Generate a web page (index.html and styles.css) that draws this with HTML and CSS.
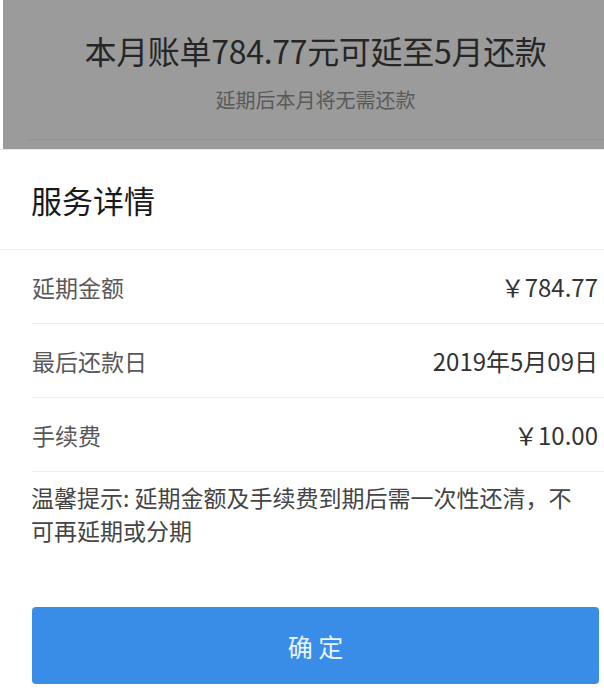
FILE: index.html
```html
<!DOCTYPE html>
<html lang="zh-CN">
<head>
    <meta charset="UTF-8">
    <meta name="viewport" content="width=device-width, initial-scale=1.0">
    <title>服务详情</title>
    <link rel="stylesheet" href="styles.css">
</head>
<body>
    <div class="mask">
        <h1 class="mask-title">本月账单784.77元可延至5月还款</h1>
        <p class="mask-sub">延期后本月将无需还款</p>
        <div class="mask-line"></div>
    </div>

    <div class="sheet">
        <h2 class="sheet-title">服务详情</h2>
        <ul class="details">
            <li class="row">
                <span class="label">延期金额</span>
                <span class="value">￥784.77</span>
            </li>
            <li class="row">
                <span class="label">最后还款日</span>
                <span class="value">2019年5月09日</span>
            </li>
            <li class="row">
                <span class="label">手续费</span>
                <span class="value">￥10.00</span>
            </li>
        </ul>
        <p class="tip">温馨提示: 延期金额及手续费到期后需一次性还清，不可再延期或分期</p>
        <button class="confirm">确 定</button>
    </div>
</body>
</html>
```

FILE: styles.css
```css
body {
    margin: 0;
    background-color: #fff;
    font-family: "Noto Sans CJK SC", "Noto Sans", sans-serif;
    color: #333;
}

.mask {
    margin-left: 3px;
    height: 149px;
    background-color: #9b9b9b;
    padding-top: 28px;
    padding-left: 24px;
    box-sizing: border-box;
    text-align: center;
}

.mask-title {
    margin: 0;
    font-size: 32px;
    line-height: 44px;
    font-weight: normal;
    letter-spacing: -0.3px;
    color: #262626;
}

.mask-sub {
    margin: 14px 0 0;
    font-size: 20px;
    line-height: 28px;
    color: #5a5a5a;
}

.mask-line {
    margin: 25px 0 0;
    height: 1px;
    background-color: #939393;
}

.sheet {
    border-top: 1px solid #e6e6e6;
}

.sheet-title {
    margin: 0;
    padding-left: 31px;
    height: 99px;
    line-height: 99px;
    font-size: 31px;
    font-weight: normal;
    color: #1a1a1a;
    border-bottom: 1px solid #f0f0f0;
}

.details {
    list-style: none;
    margin: 0;
    padding: 0;
}

.row {
    display: flex;
    justify-content: space-between;
    align-items: center;
    height: 73px;
    margin-left: 32px;
    padding-right: 6px;
    border-bottom: 1px solid #eeeeee;
}

.label {
    font-size: 23px;
    color: #585858;
}

.value {
    font-size: 24px;
    color: #333;
}

.tip {
    margin: 0;
    padding: 9px 20px 0 31px;
    font-size: 23px;
    line-height: 33px;
    color: #444;
}

.confirm {
    display: block;
    margin: 60px 5px 0 32px;
    width: calc(100% - 37px);
    height: 77px;
    border: none;
    border-radius: 4px;
    background-color: #398de6;
    color: #eaf4ff;
    font-family: inherit;
    font-size: 25px;
}
```
